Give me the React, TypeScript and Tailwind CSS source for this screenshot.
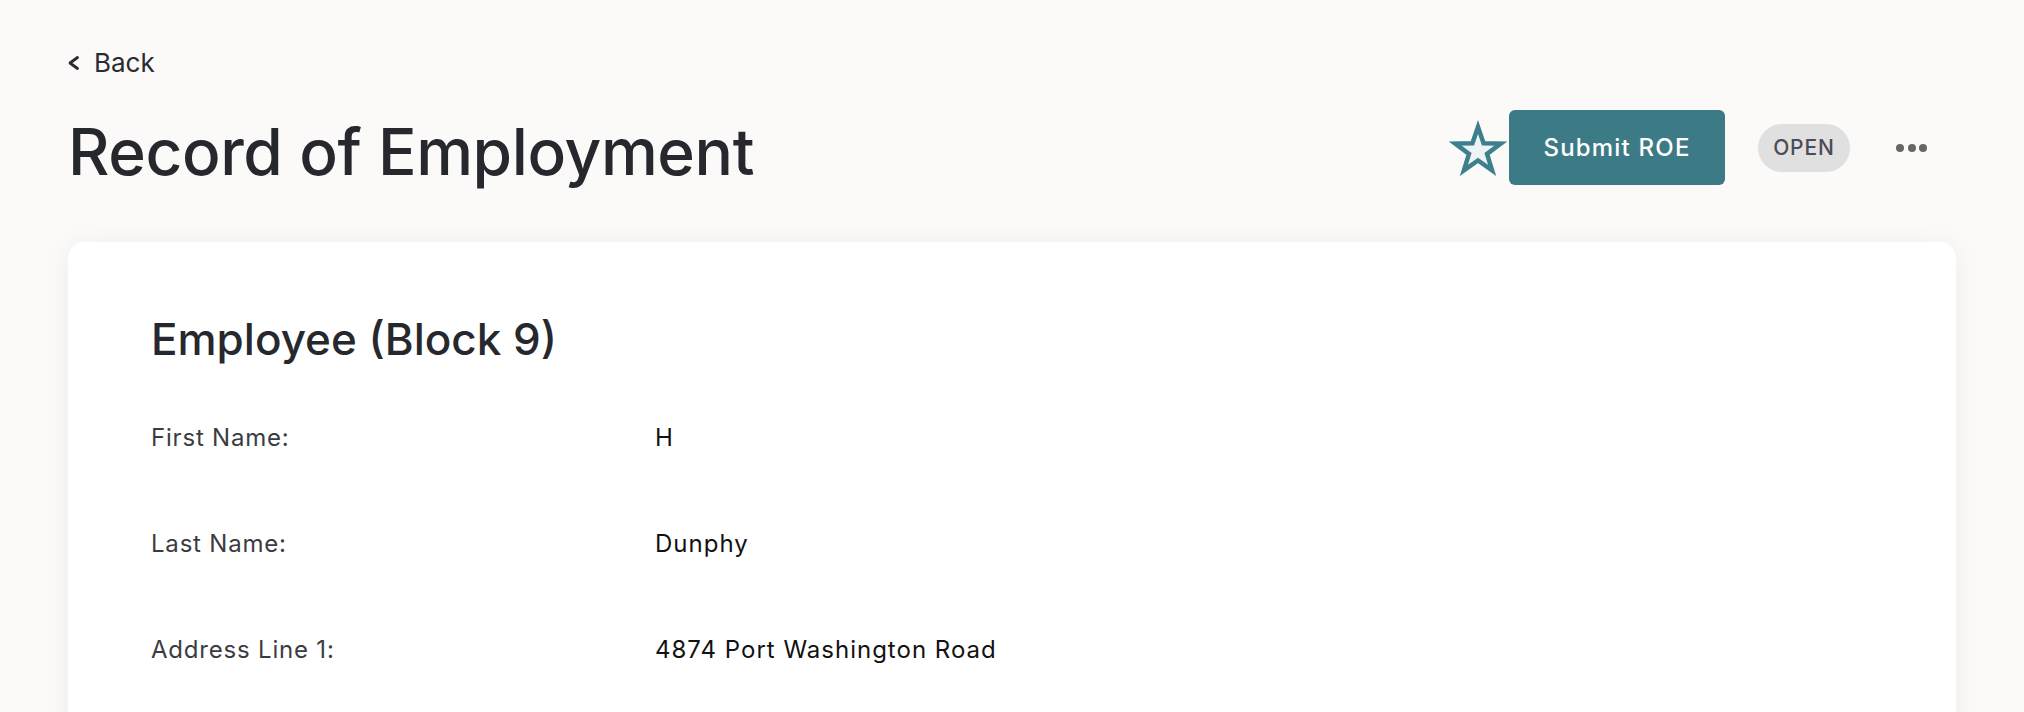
import React from "react";

const rows = [
  { label: "First Name:", value: "H" },
  { label: "Last Name:", value: "Dunphy" },
  { label: "Address Line 1:", value: "4874 Port Washington Road" },
];

export default function App() {
  return (
    <div
      className="min-h-screen bg-[#fbfaf9] px-[68px] pt-[50px] pb-[40px] text-[#27282d]"
      style={{ fontFamily: "Inter, 'Noto Sans', sans-serif" }}
    >
      <button className="flex items-center h-[26px] text-[26px] leading-[26px] text-[#2a2b30]">
        <svg width="12" height="16" viewBox="0 0 12 16" className="mr-[14px]">
          <polyline
            points="9.5,2.5 2,8 9.5,13.5"
            fill="none"
            stroke="#2a2b30"
            strokeWidth="2.8"
            strokeLinecap="round"
            strokeLinejoin="round"
          />
        </svg>
        <span>Back</span>
      </button>

      <div className="mt-[34px] flex items-start justify-between">
        <h1 className="mt-[10px] text-[64px] leading-[64px] font-medium tracking-[-0.4px] text-[#27282d]">
          Record of Employment
        </h1>
        <div className="flex items-center h-[75px]">
          <svg width="58" height="56" viewBox="0 0 58 56" className="mr-[2px]">
            <polygon
              points="29,7 34.58,23.31 51.83,23.58 38.04,33.94 43.11,50.42 29,40.5 14.89,50.42 19.96,33.94 6.17,23.58 23.42,23.31"
              fill="#eef4f5"
              stroke="#3d7f8a"
              strokeWidth="4.5"
              strokeLinejoin="miter"
            />
          </svg>
          <button className="w-[216px] h-[75px] rounded-[6px] bg-[#3c7a85] text-white text-[24px] leading-[24px] font-medium tracking-[1.2px]">
            Submit ROE
          </button>
          <span className="ml-[33px] w-[92px] h-[48px] rounded-full bg-[#e0e0e0] text-[#4a4d57] text-[21px] leading-[21px] font-medium flex items-center justify-center tracking-[0.9px]">
            OPEN
          </span>
          <div className="ml-[46px] mr-[29px] w-[31px] flex items-center justify-between">
            <span className="w-[8px] h-[8px] rounded-full bg-[#666666]" />
            <span className="w-[8px] h-[8px] rounded-full bg-[#666666]" />
            <span className="w-[8px] h-[8px] rounded-full bg-[#666666]" />
          </div>
        </div>
      </div>

      <div className="mt-[57px] rounded-[16px] bg-white shadow-[0_4px_28px_rgba(0,0,0,0.06)] pl-[83px] pr-[83px] pt-[75px] pb-[200px]">
        <h2 className="text-[44px] leading-[44px] font-medium text-[#27282d]">
          Employee (Block 9)
        </h2>
        <div className="mt-[65px] flex flex-col gap-[82px]">
          {rows.map((r) => (
            <div key={r.label} className="grid grid-cols-[504px_1fr] text-[24px] leading-[24px]">
              <span className="text-[#3b3c42] tracking-[0.8px]">{r.label}</span>
              <span className="text-[#121212] tracking-[1px]">{r.value}</span>
            </div>
          ))}
        </div>
      </div>
    </div>
  );
}
